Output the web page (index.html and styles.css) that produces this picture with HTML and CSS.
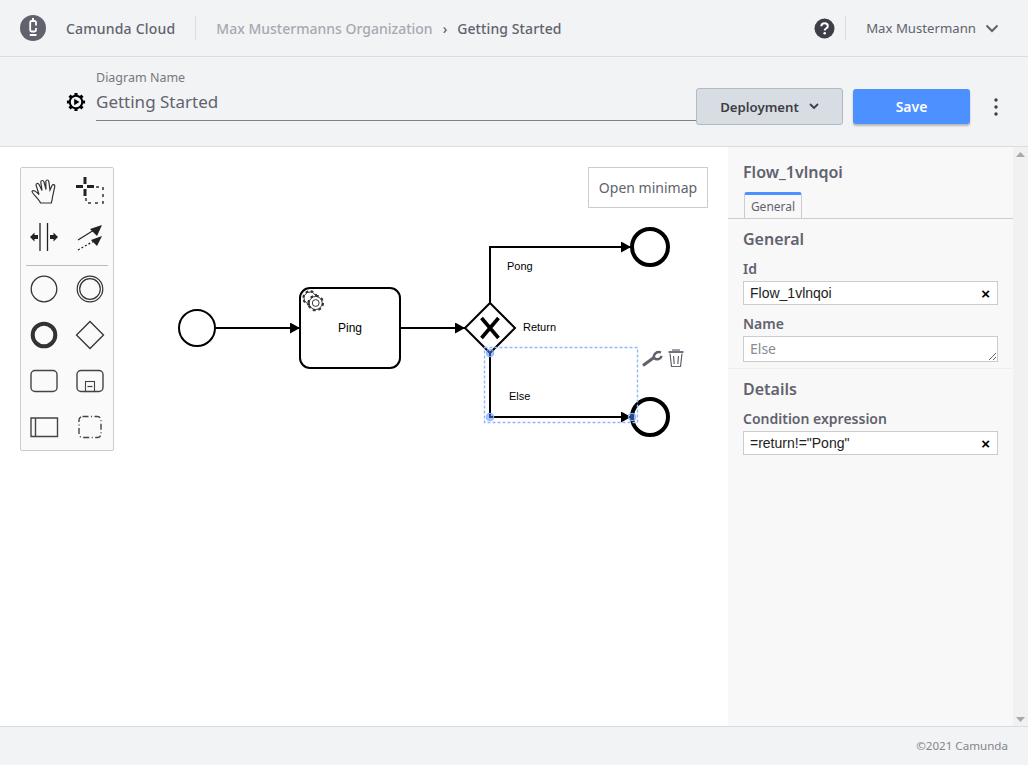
FILE: index.html
```html
<!DOCTYPE html>
<html lang="en">
<head>
<meta charset="utf-8">
<title>Camunda Cloud</title>
<link rel="stylesheet" href="styles.css">
</head>
<body>
<header class="topbar">
  <svg class="logo" width="26" height="26" viewBox="0 0 26 26"><circle cx="13" cy="13" r="13" fill="#62626e"/><path d="M16 10.500V7.500C16 6.700 15.500 6 14.500 6H11.700C10.700 6 10.200 6.700 10.200 7.500V15C10.200 15.800 10.700 16.500 11.700 16.500H14.500C15.500 16.500 16 15.800 16 15V13" fill="none" stroke="#fff" stroke-width="1.800"/><path d="M13 3V6M9.800 20H16.500" stroke="#fff" stroke-width="2"/></svg>
  <span class="brand">Camunda Cloud</span>
  <span class="vr brand-vr"></span>
  <nav class="crumbs"><span class="crumb-muted">Max Mustermanns Organization</span><span class="crumb-sep">›</span><span class="crumb-current">Getting Started</span></nav>
  <svg class="help" width="21" height="21" viewBox="0 0 21 21"><circle cx="10.500" cy="10.500" r="10" fill="#3c3f46"/><path d="M7.300 8.200C7.400 6.300 8.800 5.200 10.600 5.200 12.500 5.200 13.800 6.300 13.800 7.900 13.800 9.100 13.200 9.800 12.100 10.500 11.200 11.100 10.700 11.500 10.700 12.500" fill="none" stroke="#fff" stroke-width="2"/><circle cx="10.700" cy="15.200" r="1.300" fill="#fff"/></svg>
  <span class="vr user-vr"></span>
  <span class="user">Max Mustermann</span>
  <svg class="user-chev" width="14" height="9" viewBox="0 0 14 9"><path d="M1.500 1.500 7 7 12.500 1.500" fill="none" stroke="#62626e" stroke-width="2"/></svg>
</header>

<section class="subbar">
  <svg class="gear" width="20" height="20" viewBox="0 0 22 22"><g stroke="#000" stroke-width="3.400"><path d="M11 1V21M1 11H21M3.900 3.900 18.100 18.100M18.100 3.900 3.900 18.100"/></g><circle cx="11" cy="11" r="8" fill="#000"/><circle cx="11" cy="11" r="5.800" fill="#f1f3f5"/><path d="M9 7.300 14.800 11 9 14.700Z" fill="#000"/></svg>
  <div class="name-field">
    <label class="name-label">Diagram Name</label>
    <div class="name-value">Getting Started</div>
  </div>
  <button class="btn-deploy">Deployment<svg width="10" height="7" viewBox="0 0 10 7"><path d="M1 1 5 5 9 1" fill="none" stroke="#3c3f46" stroke-width="1.800"/></svg></button>
  <button class="btn-save">Save</button>
  <svg class="more" width="4" height="18" viewBox="0 0 4 18"><circle cx="2" cy="2" r="1.700"/><circle cx="2" cy="9" r="1.700"/><circle cx="2" cy="16" r="1.700"/></svg>
</section>

<main class="workspace">
  <div class="canvas">
    <svg class="diagram" width="728" height="579" viewBox="0 147 728 579">
      <defs>
        <marker id="arrow" markerWidth="10" markerHeight="11" refX="10" refY="5.500" orient="auto" markerUnits="userSpaceOnUse"><path d="M0 0 10 5.500 0 11Z" fill="#000"/></marker>
      </defs>
      <g fill="none" stroke="#000" stroke-width="2">
        <circle cx="197" cy="328" r="18" fill="#fff"/>
        <path d="M216 328H300" marker-end="url(#arrow)"/>
        <rect x="300" y="288" width="100" height="80" rx="10" fill="#fff"/>
        <path d="M401 328H465" marker-end="url(#arrow)"/>
        <path d="M490 303V247H631" marker-end="url(#arrow)"/>
        <path d="M490 353V417H631" marker-end="url(#arrow)"/>
        <path d="M490 303 515 328 490 353 465 328Z" fill="#fff"/>
      </g>
      <path d="M481.500 318 498.500 338M498.500 318 481.500 338" stroke="#000" stroke-width="3.600" fill="none"/>
      <circle cx="650" cy="247" r="18" fill="#fff" stroke="#000" stroke-width="4"/>
      <circle cx="650" cy="417" r="18" fill="#fff" stroke="#000" stroke-width="4"/>
      <circle cx="310" cy="298" r="6.400" fill="none" stroke="#333" stroke-width="2.600" stroke-dasharray="2.500 2.520"/>
      <circle cx="310" cy="298" r="6" fill="#fff" stroke="#222" stroke-width=".9"/>
      <circle cx="315.700" cy="303" r="7" fill="none" stroke="#333" stroke-width="2.600" stroke-dasharray="2.750 2.750"/>
      <circle cx="315.700" cy="303" r="6.500" fill="#fff" stroke="#222" stroke-width=".9"/>
      <circle cx="315.700" cy="303" r="3.400" fill="#fff" stroke="#222" stroke-width=".9"/>
      <g class="dlabel">
        <text x="338" y="332">Ping</text>
        <text x="507" y="270" font-size="11">Pong</text>
        <text x="523" y="331" font-size="11">Return</text>
        <text x="509" y="400" font-size="11">Else</text>
      </g>
      <rect x="484.500" y="347.500" width="153" height="75" fill="none" stroke="#8fb8ff" stroke-width="1.400" stroke-dasharray="3 2"/>
      <g fill="#4d90ff" fill-opacity=".5" stroke="#8fb8ff" stroke-width="1">
        <circle cx="490" cy="353" r="3.800"/>
        <circle cx="490" cy="417" r="3.800"/>
        <circle cx="632" cy="417" r="3.800"/>
      </g>
      <g stroke="#62626e" fill="none">
        <path d="M643 365.500 654 357.500" stroke-width="3"/>
        <path d="M661 352.500C657 351 653 354 654 358 657 360.500 660.500 359 661.800 356" stroke-width="2.400"/>
      </g>
      <g stroke="#62626e" fill="none" stroke-width="1.200">
        <path d="M668.500 352H683.500" stroke-width="1.800"/>
        <path d="M672 350H680"/>
        <path d="M670 353.500 671.500 366.500H680.500L682 353.500"/>
        <path d="M673.500 356 674.200 364M678.500 356 677.800 364"/>
      </g>
    </svg>

    <div class="palette">
      <div class="pal-grid pal-tools">
        <svg width="30" height="30" viewBox="0 0 30 30"><path d="M11.500 28C10 24 3.500 19 3 16.500 4 14.500 7 16 10 19.500L7 10C7 8 9.300 8 10.200 9.800L13 15.500 11.800 7C12 5 14.300 5 15 7L17 14.500 16.800 6.500C17.200 4.500 19.300 4.500 19.800 6.500L21 15 23 10.500C24 9 26 9.500 25.800 11.500L23.500 22C23.300 24.500 22.800 26.500 22.300 28Z" fill="none" stroke="#333" stroke-width="1.200"/></svg>
        <svg width="30" height="30" viewBox="0 0 30 30"><path d="M10 2V9M10 14V21M1 11.500H8M12 11.500H19" stroke="#222" stroke-width="3"/><path d="M21 12H28V28H11V22" fill="none" stroke="#333" stroke-width="1.500" stroke-dasharray="3 4"/></svg>
        <svg width="30" height="30" viewBox="0 0 30 30"><path d="M11 1V29M18.500 1V29" stroke="#222" stroke-width="1.300"/><path d="M1 15 5.500 10.500V13H9V17H5.500V19.500ZM29 15 24.500 10.500V13H21V17H24.500V19.500Z" fill="#222"/></svg>
        <svg width="30" height="30" viewBox="0 0 30 30"><path d="M3 18 19 8" stroke="#222" stroke-width="1.200"/><path d="M27 3 15 7 22 14Z" fill="#222"/><path d="M3 28 19 19" stroke="#222" stroke-width="1.200" stroke-dasharray="2 2"/><path d="M27 14 16 18 22 24Z" fill="#222"/></svg>
      </div>
      <hr class="pal-sep">
      <div class="pal-grid">
        <svg width="30" height="30" viewBox="0 0 30 30"><circle cx="15" cy="15" r="12.800" fill="none" stroke="#333" stroke-width="1.300"/></svg>
        <svg width="30" height="30" viewBox="0 0 30 30"><circle cx="15" cy="15" r="12.800" fill="none" stroke="#333" stroke-width="1.200"/><circle cx="15" cy="15" r="10.300" fill="none" stroke="#333" stroke-width="1.200"/></svg>
        <svg width="30" height="30" viewBox="0 0 30 30"><circle cx="15" cy="15" r="11.300" fill="none" stroke="#333" stroke-width="4"/></svg>
        <svg width="30" height="30" viewBox="0 0 30 30"><path d="M15 1.500 28.500 15 15 28.500 1.500 15Z" fill="none" stroke="#333" stroke-width="1.300"/></svg>
        <svg width="30" height="30" viewBox="0 0 30 30"><rect x="2" y="4.500" width="26" height="21" rx="4" fill="none" stroke="#444" stroke-width="1.400"/></svg>
        <svg width="30" height="30" viewBox="0 0 30 30"><rect x="2" y="4.500" width="26" height="21" rx="4" fill="none" stroke="#444" stroke-width="1.400"/><rect x="10.500" y="15.500" width="9" height="10" fill="none" stroke="#444" stroke-width="1.100"/><path d="M12.500 20.500H17.500" stroke="#444" stroke-width="1.200"/></svg>
        <svg width="30" height="30" viewBox="0 0 30 30"><path d="M2 6H28.500V24.500H2ZM6.500 6V24.500" fill="none" stroke="#444" stroke-width="1.400"/></svg>
        <svg width="30" height="30" viewBox="0 0 30 30"><rect x="4" y="4.500" width="22" height="21" rx="3.500" fill="none" stroke="#444" stroke-width="1.400" stroke-dasharray="6 2.500 1 2.500"/></svg>
      </div>
    </div>
    <button class="minimap">Open minimap</button>
  </div>

  <aside class="props">
    <div class="props-body">
      <h2 class="props-title">Flow_1vlnqoi</h2>
      <div class="tabs"><span class="tab">General</span></div>
      <div class="group">
        <h3 class="group-title">General</h3>
        <div class="label">Id</div>
        <div class="input"><span>Flow_1vlnqoi</span><b class="clear">×</b></div>
        <div class="label">Name</div>
        <textarea class="textarea" rows="1">Else</textarea>
      </div>
      <div class="group group-details">
        <h3 class="group-title">Details</h3>
        <div class="label">Condition expression</div>
        <div class="input"><span>=return!="Pong"</span><b class="clear">×</b></div>
      </div>
    </div>
    <div class="scrollbar">
      <svg width="9" height="5" viewBox="0 0 9 5"><path d="M4.500 0 9 5H0Z" fill="#a8a8a8"/></svg>
      <svg width="9" height="5" viewBox="0 0 9 5"><path d="M4.500 5 9 0H0Z" fill="#a8a8a8"/></svg>
    </div>
  </aside>
</main>

<footer class="footer">©2021 Camunda</footer>
</body>
</html>
```
FILE: styles.css
```css
* { box-sizing: border-box; }
html, body { height: 100%; }
body {
  margin: 0;
  display: flex;
  flex-direction: column;
  height: 765px;
  overflow: hidden;
  background: #f1f3f5;
  font-family: "Noto Sans", Roboto, sans-serif;
  color: #62626e;
}
.topbar {
  height: 57px;
  flex: none;
  display: flex;
  align-items: center;
  padding-left: 20px;
  border-bottom: 1px solid #d8dce3;
  font-size: 14px;
}
.logo { flex: none; }
.brand { margin-left: 20px; font-weight: 500; letter-spacing: .2px; }
.vr { width: 1px; height: 24px; background: #d8dce3; }
.brand-vr { margin-left: 20px; }
.crumbs { margin-left: 20px; display: flex; align-items: center; flex: 1; font-weight: 500; }
.crumb-muted { color: #a8a8b0; }
.crumb-sep { margin: 0 10px; }
.crumb-current { letter-spacing: .1px; }
.help { flex: none; }
.user-vr { margin-left: 10px; }
.user { margin-left: 20px; font-size: 13.200px; }
.user-chev { margin-left: 9px; margin-right: 29px; }

.subbar {
  height: 90px;
  flex: none;
  display: flex;
  align-items: flex-start;
  padding-left: 66px;
  border-bottom: 1px solid #d8dce3;
}
.gear { margin-top: 35px; margin-right: 10px; flex: none; }
.name-field { width: 600px; margin-top: 12px; }
.name-label { display: block; font-size: 12.500px; line-height: 17px; color: #77777f; }
.name-value {
  font-size: 17px;
  line-height: 26px;
  height: 35px;
  padding-top: 3px;
  border-bottom: 1px solid #7f7f85;
}
.btn-deploy {
  width: 147px;
  height: 37px;
  margin-top: 31px;
  padding-right: 6px;
  border: 1px solid #b0bac7;
  border-radius: 3px;
  background: #d8dce3;
  color: #3c3f46;
  font: 600 13.200px "Noto Sans", Roboto, sans-serif;
  display: flex;
  align-items: center;
  justify-content: center;
  gap: 10px;
}
.btn-save {
  width: 117px;
  height: 35px;
  margin-top: 32px;
  margin-left: 10px;
  border: 0;
  border-radius: 3px;
  background: #4d90ff;
  color: #fff;
  font: 600 14px "Noto Sans", Roboto, sans-serif;
  box-shadow: 0 2px 2px rgba(0, 0, 0, .25);
}
.more { margin-left: 24px; margin-top: 41px; fill: #3c3f46; }

.workspace { flex: 1; min-height: 0; display: flex; background: #fff; }
.canvas { position: relative; width: 728px; flex: none; background: #fff; }
.diagram { display: block; }
.dlabel { font-family: "Liberation Sans", Arial, sans-serif; font-size: 12px; fill: #000; }
.palette {
  position: absolute;
  left: 20px;
  top: 20px;
  width: 94px;
  height: 284px;
  background: #fafafa;
  border: 1px solid #cccccc;
  border-radius: 2px;
}
.pal-grid { display: grid; grid-template-columns: repeat(2, 46px); grid-auto-rows: 46px; justify-items: center; align-items: center; }
.pal-tools { margin-top: -1px; row-gap: 1px; }
.pal-grid svg { display: block; }
.pal-sep { margin: 5px 5px 0; border: 0; border-top: 1px solid #bbb; height: 0; }
.minimap {
  position: absolute;
  left: 588px;
  top: 20px;
  width: 120px;
  height: 41px;
  background: #fff;
  border: 1px solid #cccccc;
  color: #62626e;
  font: 14px "Noto Sans", Roboto, sans-serif;
}

.props { width: 300px; flex: none; display: flex; background: #f8f8f8; }
.props-body { width: 285px; flex: none; }
.props-title { margin: 15px 0 0 15px; font-size: 16px; line-height: 20px; font-weight: 600; }
.tabs { height: 37px; padding: 10px 0 0 16px; border-bottom: 1px solid #ccc; }
.tab {
  display: block;
  width: 58px;
  height: 27px;
  border: 1px solid #ccc;
  border-top: 3px solid #4d90ff;
  border-bottom: 0;
  font-size: 12px;
  line-height: 24px;
  text-align: center;
  border-radius: 3px 3px 0 0;
}
.group { padding: 9px 15px 0; }
.group-details { border-top: 1px solid #eee; margin-top: 6px; }
.group-title { margin: 0; font-size: 16px; line-height: 22px; font-weight: 600; }
.label { margin-top: 9px; font-size: 14px; line-height: 20px; font-weight: 600; }
.input {
  height: 24px;
  margin-top: 2px;
  display: flex;
  align-items: center;
  justify-content: space-between;
  padding: 0 7px 0 6px;
  background: #fff;
  border: 1px solid #ccc;
  font: 14px "Liberation Sans", Arial, sans-serif;
  color: #222;
}
.clear { font-size: 15px; color: #000; }
.textarea {
  display: block;
  width: 100%;
  height: 26px;
  margin-top: 2px;
  padding: 2px 6px;
  background: #fff;
  border: 1px solid #ccc;
  border-radius: 0;
  font: 14px "Noto Sans", Roboto, sans-serif;
  color: #8a8a92;
}
.scrollbar { width: 15px; background: #f1f1f1; display: flex; flex-direction: column; justify-content: space-between; align-items: center; padding: 5px 0 4px; }
.scrollbar svg { display: block; }

.footer {
  height: 39px;
  flex: none;
  border-top: 1px solid #d8dce3;
  font-size: 11.600px;
  line-height: 38px;
  text-align: right;
  padding-right: 20px;
  color: #85858d;
}
```
